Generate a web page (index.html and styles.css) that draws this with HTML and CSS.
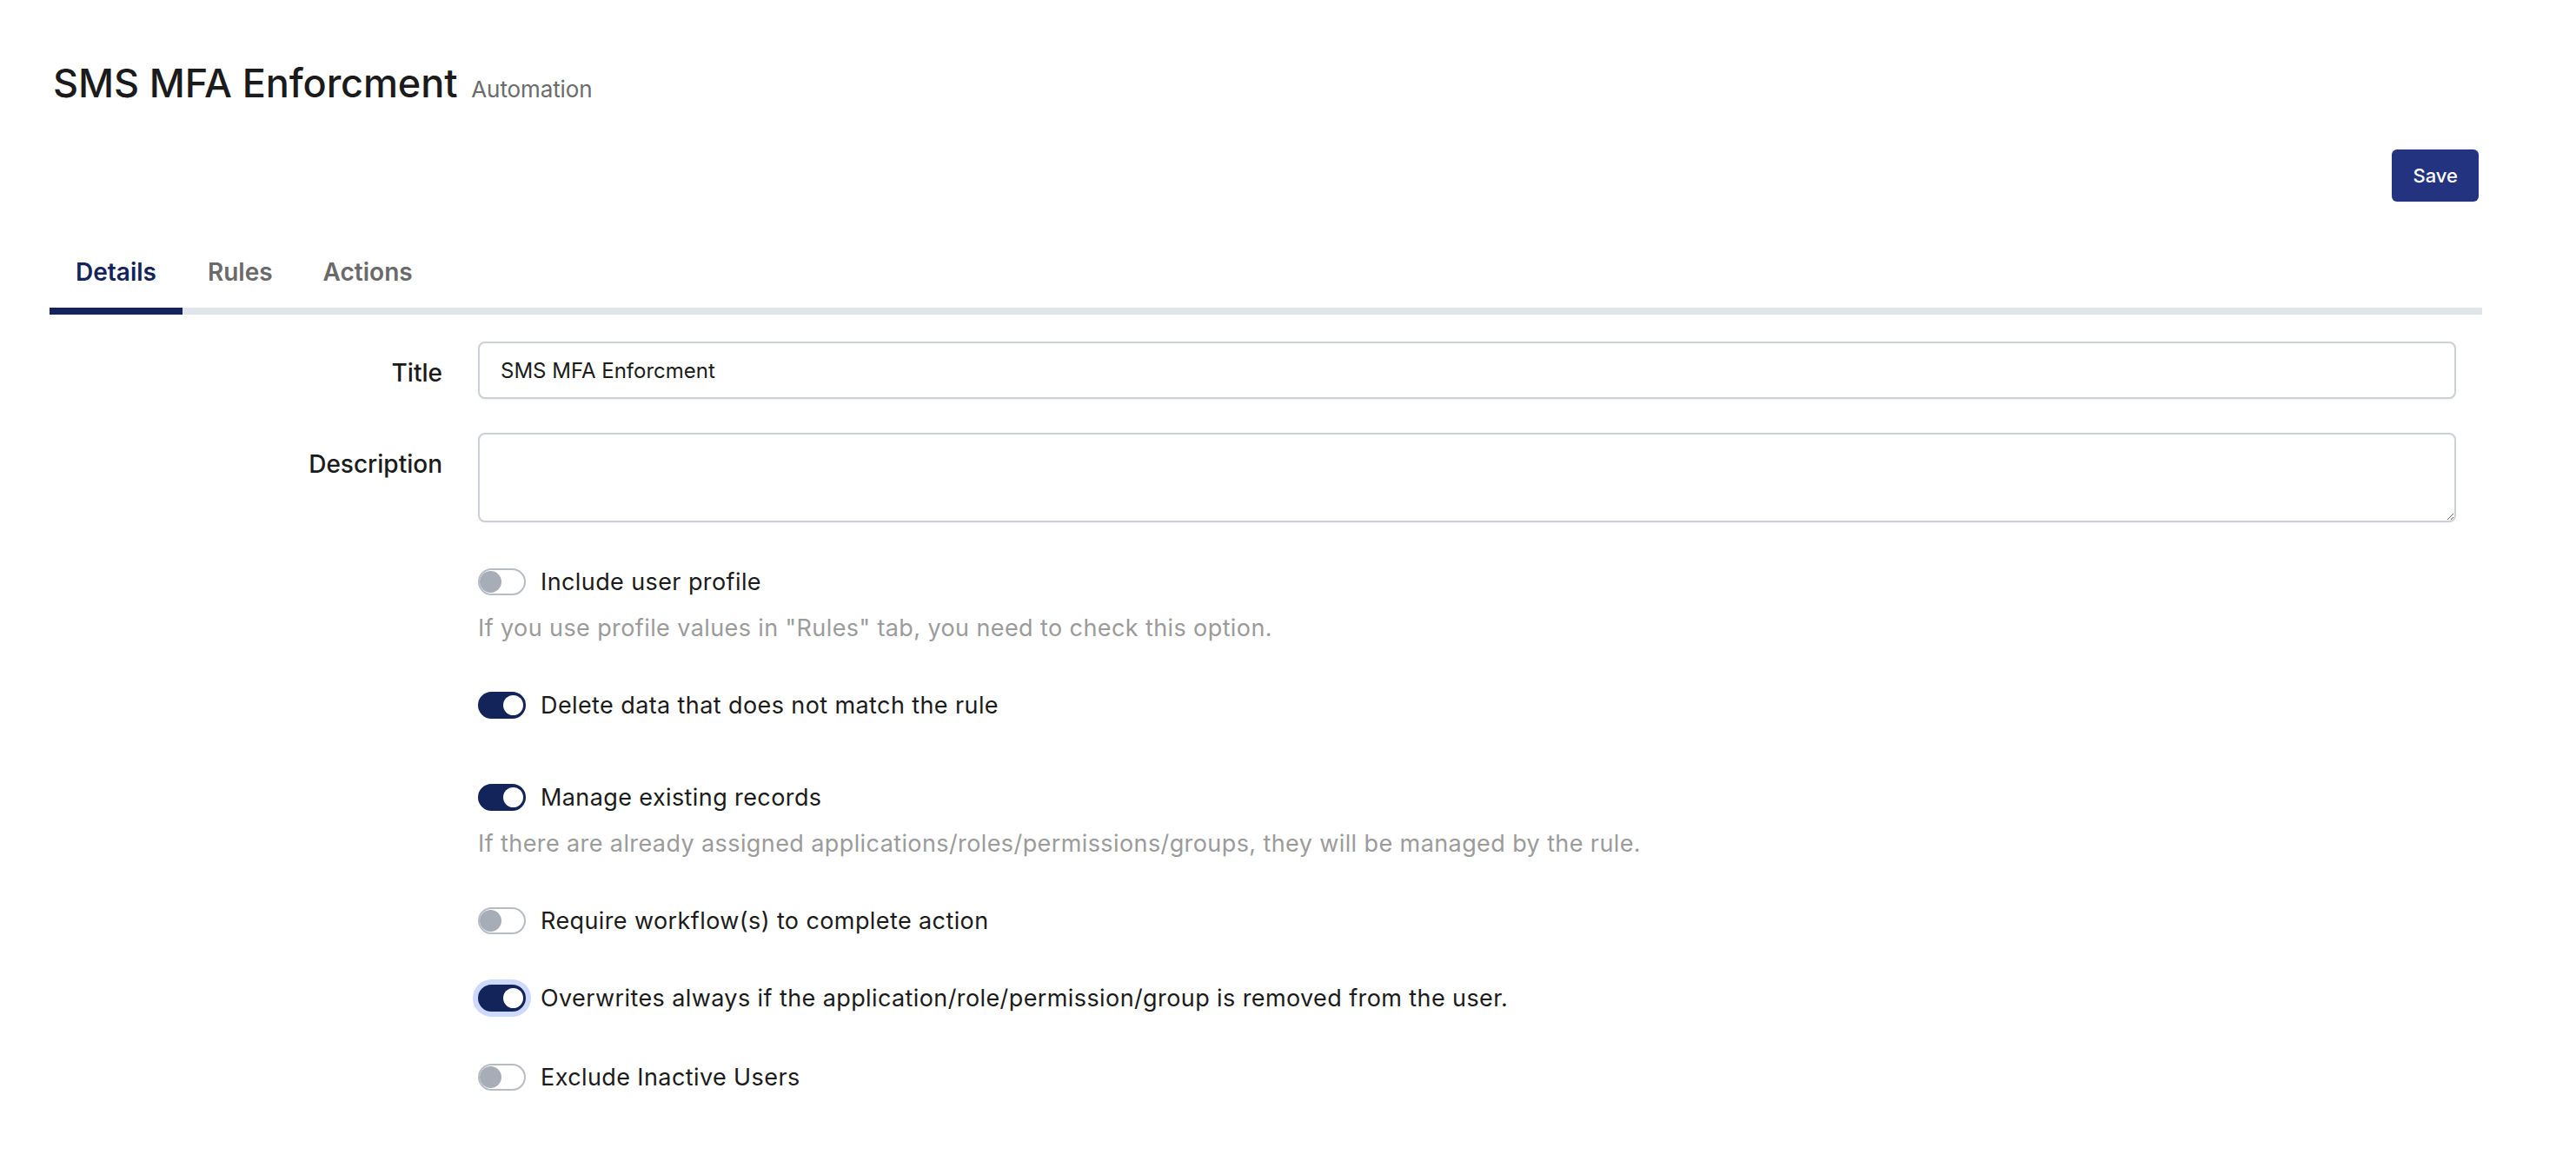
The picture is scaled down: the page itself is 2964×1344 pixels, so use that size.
FILE: index.html
```html
<!DOCTYPE html>
<html>
<head>
  <title>SMS MFA Enforcment - Automation</title>
  <link rel="stylesheet" href="styles.css">
</head>
<body>

<div class="page">
  <h1 class="page-title">SMS MFA Enforcment <small>Automation</small></h1>

  <div class="toolbar">
    <button class="btn-primary" type="button">Save</button>
  </div>

  <nav class="tabs">
    <a class="tab active" href="#">Details</a>
    <a class="tab" href="#">Rules</a>
    <a class="tab" href="#">Actions</a>
  </nav>

  <form class="form">
    <div class="row">
      <label class="row-label" for="title">Title</label>
      <div class="row-control">
        <input id="title" class="text-input" type="text" value="SMS MFA Enforcment">
      </div>
    </div>

    <div class="row">
      <label class="row-label" for="desc">Description</label>
      <div class="row-control">
        <textarea id="desc" class="text-area"></textarea>
      </div>
    </div>

    <div class="row">
      <span class="row-label"></span>
      <div class="row-control switches">
        <div class="switch-item">
          <label class="switch-line"><input class="switch" type="checkbox"> Include user profile</label>
          <p class="hint">If you use profile values in "Rules" tab, you need to check this option.</p>
        </div>
        <div class="switch-item spaced">
          <label class="switch-line"><input class="switch" type="checkbox" checked> Delete data that does not match the rule</label>
        </div>
        <div class="switch-item">
          <label class="switch-line"><input class="switch" type="checkbox" checked> Manage existing records</label>
          <p class="hint">If there are already assigned applications/roles/permissions/groups, they will be managed by the rule.</p>
        </div>
        <div class="switch-item">
          <label class="switch-line"><input class="switch" type="checkbox"> Require workflow(s) to complete action</label>
        </div>
        <div class="switch-item has-focus">
          <label class="switch-line"><input class="switch focused" type="checkbox" checked> Overwrites always if the application/role/permission/group is removed from the user.</label>
        </div>
        <div class="switch-item">
          <label class="switch-line"><input class="switch" type="checkbox"> Exclude Inactive Users</label>
        </div>
      </div>
    </div>
  </form>
</div>

</body>
</html>
```

FILE: styles.css
```css
body {
  margin: 0;
  font-family: Inter, "Noto Sans", sans-serif;
  color: #1b1b1b;
  background: #fff;
}
.page {
  padding: 68px 108px 40px 57px;
}
.page-title {
  margin: 0 0 0 4px;
  font-size: 45px;
  font-weight: 500;
  line-height: normal;
  letter-spacing: -0.1px;
}
.page-title small {
  font-size: 26px;
  font-weight: 400;
  color: #6b6b6b;
  margin-left: 4px;
}
.toolbar {
  display: flex;
  justify-content: flex-end;
  margin-top: 49px;
  padding-right: 4px;
}
.btn-primary {
  height: 60px;
  padding: 0 24px;
  border: 0;
  border-radius: 6px;
  background: #24337f;
  color: #fff;
  font-family: inherit;
  font-size: 22px;
  font-weight: 500;
}
.tabs {
  display: flex;
  margin-top: 64px;
  border-bottom: 8px solid #e0e4eb;
}
.tab {
  padding: 0 29px 24px;
  font-size: 28px;
  font-weight: 600;
  line-height: 34px;
  color: #6a6a6a;
  text-decoration: none;
}
.tab.active {
  padding: 0 30px 24px;
  color: #13245a;
  border-bottom: 8px solid #13245a;
  margin-bottom: -8px;
}
.form {
  padding: 31px 30px 0 0;
}
.row {
  display: grid;
  grid-template-columns: 452px 1fr;
  column-gap: 41px;
  margin-bottom: 39px;
}
.row-label {
  text-align: right;
  padding-top: 19px;
  font-size: 28px;
  font-weight: 500;
  color: #1b1b1b;
}
.text-input,
.text-area {
  display: block;
  width: 100%;
  box-sizing: border-box;
  border: 2px solid #cdd0d6;
  border-radius: 8px;
  box-shadow: 0 1px 2px rgba(0, 0, 0, 0.06);
  font-family: inherit;
  font-size: 24px;
  color: #1b1b1b;
  outline: none;
}
.text-input {
  height: 66px;
  padding: 0 24px;
}
.text-area {
  height: 103px;
  padding: 12px 24px;
  resize: vertical;
}
.switches {
  padding-top: 14px;
}
.switch-item {
  margin-bottom: 58px;
}
.switch-item.spaced {
  margin-bottom: 75px;
}
.switch-item.has-focus {
  margin-bottom: 60px;
}
.switch-line {
  display: flex;
  align-items: center;
  gap: 17px;
  font-size: 27px;
  line-height: 31px;
  letter-spacing: 0.4px;
}
.switch {
  appearance: none;
  -webkit-appearance: none;
  position: relative;
  flex: none;
  margin: 0;
  width: 55px;
  height: 31px;
  box-sizing: border-box;
  border: 2px solid #b7bcc4;
  border-radius: 16px;
  background: #fff;
}
.switch::before {
  content: "";
  position: absolute;
  left: 0;
  top: 1px;
  width: 25px;
  height: 25px;
  border-radius: 50%;
  background: #a7adb6;
}
.switch:checked {
  background: #13245a;
  border-color: #13245a;
}
.switch:checked::before {
  left: auto;
  right: 1px;
  width: 23px;
  height: 23px;
  top: 2px;
  background: #fff;
}
.switch.focused {
  box-shadow: 0 0 0 6px #cdd9fd;
}
.hint {
  margin: 23px 0 0;
  font-size: 27px;
  line-height: 30px;
  letter-spacing: 0.4px;
  color: #9b9b9b;
}
```
